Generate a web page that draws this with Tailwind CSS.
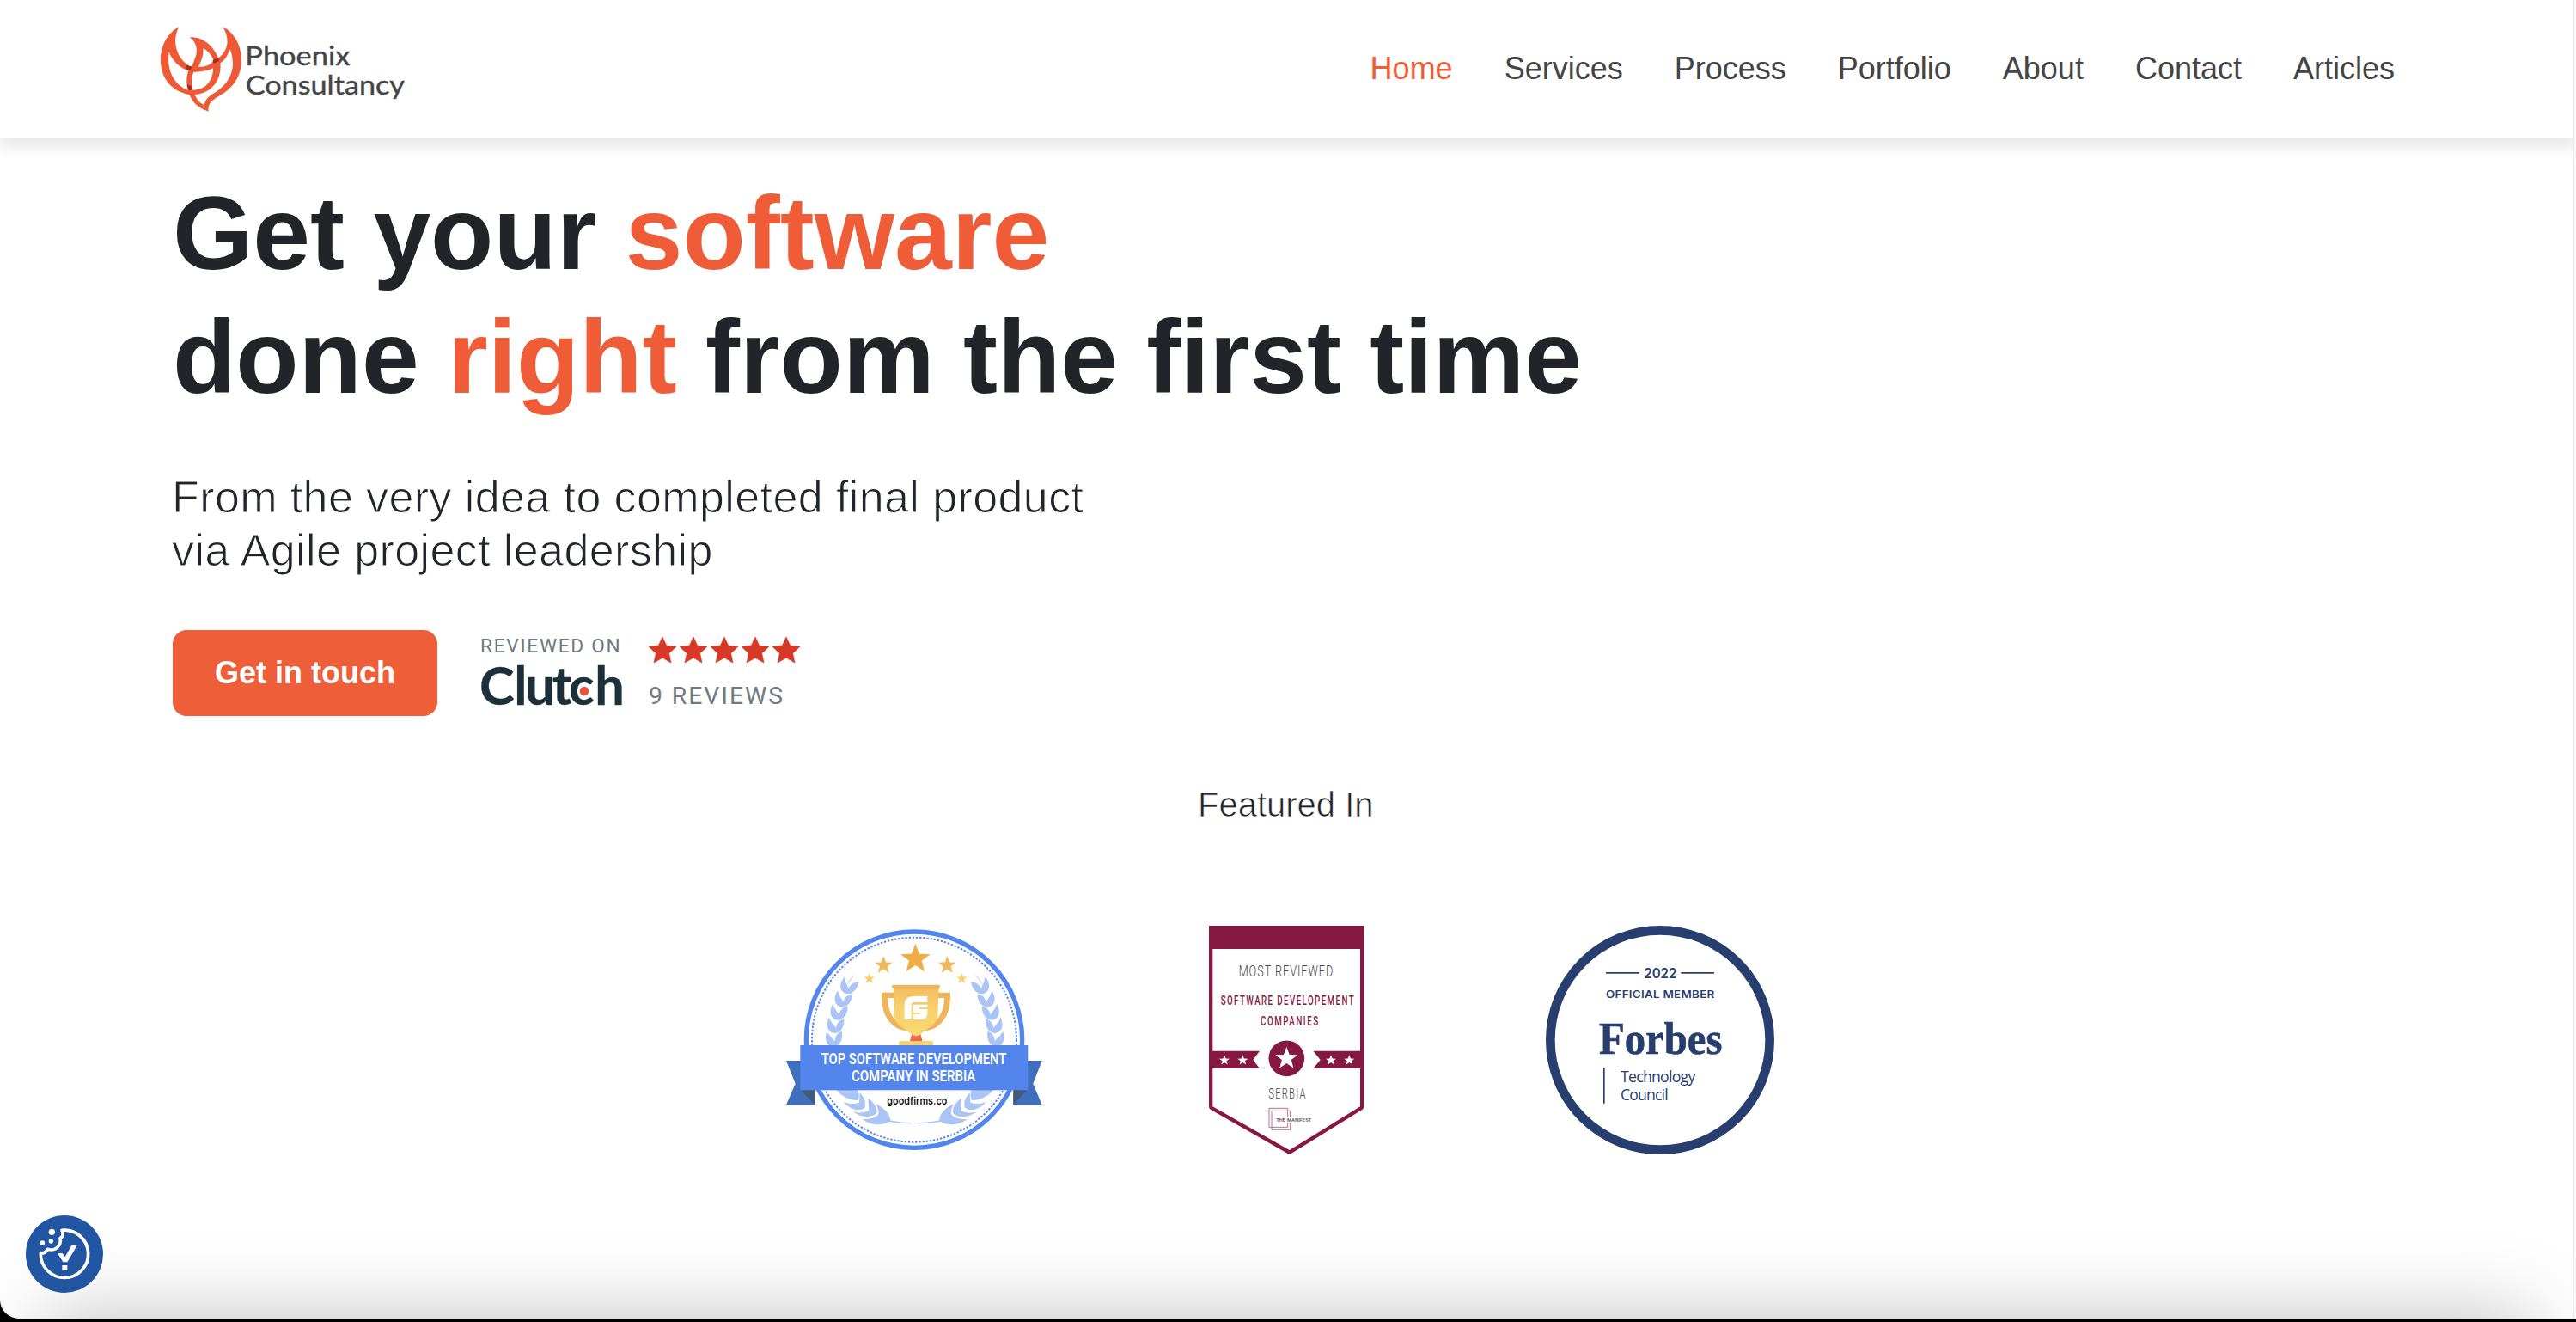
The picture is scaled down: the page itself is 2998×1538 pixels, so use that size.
<!DOCTYPE html>
<html lang="en">
<head>
<meta charset="utf-8">
<title>Phoenix Consultancy</title>
<script src="https://cdn.jsdelivr.net/npm/@tailwindcss/browser@4"></script>
</head>
<body class="bg-black font-['Liberation_Sans',sans-serif] text-[#212529]">
<div class="relative h-[1534px] w-[2998px] overflow-hidden rounded-bl-[22px] bg-white">
  <header class="flex h-[160px] items-start justify-between bg-white pr-[211px] pl-[186px] shadow-[0_12px_16px_rgba(0,0,0,0.095)]">
    <!-- logo -->
    <svg class="mt-[30px] h-[100px] w-[288px] overflow-visible" viewBox="48 60 864 300">
      <path fill="#ee5a36" fill-rule="evenodd" d="M115 63C50 100 40 180 60 230C78 275 120 295 152 300C160 330 190 350 218 359C215 335 225 322 255 305C300 280 333 240 333 180C333 130 310 85 268 63C290 100 292 142 252 173C235 130 200 98 152 100C180 120 180 150 172 170L160 203C120 190 82 125 115 63Z
      M80 150C90 185 125 210 148 217C140 240 140 262 147 285C105 270 70 225 80 150Z
      M199 138C220 150 230 165 236 182C222 198 205 204 182 203C195 180 202 160 199 138Z
      M166 221C190 222 215 218 234 208C234 250 210 285 163 284C158 260 158 240 166 221Z
      M292 142C285 165 275 180 259 190C265 240 235 295 170 300C178 320 190 332 203 335C208 316 220 303 245 290C285 265 308 220 302 180C301 165 297 150 292 142Z"/>
      <path fill="#a52c20" d="M142 198L160 203L154 218L138 211ZM232 180L252 172L256 182L236 192ZM143 264L158 270L160 284L147 284Z"/>
      <g fill="#454545" stroke="#454545" stroke-width="1.2" font-family="Lato, sans-serif" font-size="95">
        <text x="346" y="197" textLength="366" lengthAdjust="spacingAndGlyphs">Phoenix</text>
        <text x="347" y="299" textLength="556" lengthAdjust="spacingAndGlyphs">Consultancy</text>
      </g>
    </svg>
    <nav class="flex h-full items-center gap-[60px] text-[36px] text-[#454545]">
      <a class="text-[#ee5d38]">Home</a><a>Services</a><a>Process</a><a>Portfolio</a><a>About</a><a>Contact</a><a>Articles</a>
    </nav>
  </header>

  <main class="pt-[39px]">
    <h1 class="pl-[201px] text-[120px] leading-[144px] font-bold">Get your <span class="text-[#ee5d38]">software</span><br>done <span class="text-[#ee5d38]">right</span> from the first time</h1>
    <p class="mt-[60px] pl-[200px] text-[52px] leading-[62px] tracking-[0.4px] [-webkit-text-stroke:1px_white]">From the very idea to completed final product<br>via Agile project leadership</p>
    <div class="mt-[62px] flex h-[100px] items-start gap-[51px] pl-[201px]">
      <button class="h-[100px] w-[308px] rounded-[16px] bg-[#ed5e39] text-[36px] font-bold text-white">Get in touch</button>
      <svg class="mt-[7px] h-[84px] w-[376px] overflow-visible" viewBox="60 60 1128 252">
        <defs><path id="star" d="M0-48L14-18L48-14L23 9L30 42L0 25L-30 42L-23 9L-48-14L-14-18Z"/></defs>
        <g font-family="Roboto, sans-serif" fill="#6f7b7e">
          <text x="57" y="117" font-size="68" textLength="488">REVIEWED ON</text>
          <text x="645" y="296" font-size="85" textLength="468">9 REVIEWS</text>
        </g>
        <text x="54 175 214 308 366 457" y="299" font-family="Lato, sans-serif" font-weight="700" font-size="184" fill="#1d303a" stroke="#1d303a" stroke-width="1">Clutch</text>
        <circle cx="420" cy="252" r="16" fill="#f04f3c"/>
        <g fill="#d63a26" stroke="#d63a26" stroke-width="2"><use href="#star" x="693" y="111"/><use href="#star" x="801" y="111"/><use href="#star" x="909" y="111"/><use href="#star" x="1017" y="111"/><use href="#star" x="1125" y="111"/></g>
      </svg>
    </div>

    <h2 class="mt-[79px] pl-[1394px] text-[40px] leading-[48px] [-webkit-text-stroke:0.7px_white]">Featured In</h2>
    <div class="mt-[117px] flex pl-[915px]">
      <!-- GoodFirms badge -->
      <svg class="h-[266px] w-[298px]" viewBox="45 51 894 798">
        <defs>
          <linearGradient id="cup" x1="0" y1="0" x2="0" y2="1"><stop offset="0" stop-color="#f1bd62"/><stop offset=".45" stop-color="#f8d26c"/><stop offset="1" stop-color="#fbd870"/></linearGradient>
          <path id="s5" d="M0-50L13-15L50-14L21 8L31 44L0 23L-31 44L-21 8L-50-14L-13-15Z"/>
          <path id="leaf" d="M-17-34C-34-8-29 20-4 24C18 24 34 4 34-22C20-21 8-12 2 6C-4-8-14-16-17-34Z"/>
          <g id="laurel" fill="#aac4f6">
            <path d="M284 225C272 235 262 248 256 262C260 246 270 232 284 225Z"/>
            <use href="#leaf" transform="translate(261 265) rotate(8)"/>
            <use href="#leaf" transform="translate(242 311)"/>
            <use href="#leaf" transform="translate(227 356) rotate(-4)"/>
            <use href="#leaf" transform="translate(216 402) rotate(-8)"/>
            <use href="#leaf" transform="translate(211 448) rotate(-13)"/>
            <path d="M219 622H296C300 640 300 650 295 660C268 662 237 646 219 622Z"/>
            <path d="M302 634C316 648 324 664 320 686C294 704 260 686 246 666C266 674 284 674 300 668Z"/>
            <path d="M331 652C350 668 364 684 361 704C340 726 300 718 278 700C300 706 320 704 334 696Z"/>
            <path d="M358 672C392 690 410 710 408 732C380 752 340 748 310 726C335 728 354 722 366 710C370 700 366 688 358 672Z"/>
            <path d="M405 729Q440 738 485 738V742Q440 743 404 735Z"/>
          </g>
        </defs>
        <circle cx="492" cy="449" r="377" fill="#fff" stroke="#5386ed" stroke-width="16"/>
        <circle cx="492" cy="449" r="357" fill="none" stroke="#5386ed" stroke-width="6" stroke-dasharray="7 5.5"/>
        <use href="#laurel"/><use href="#laurel" transform="translate(988 0) scale(-1 1)"/>
        <use href="#s5" transform="translate(496 165) scale(1.04)" fill="#f1ac45"/>
        <g fill="#f0b75c"><use href="#s5" transform="translate(385 188) scale(.62)"/><use href="#s5" transform="translate(607 188) scale(.62)"/></g>
        <g fill="#f8d16c"><use href="#s5" transform="translate(335 235) scale(.38)"/><use href="#s5" transform="translate(658 235) scale(.38)"/></g>
        <path fill="#f0b45a" fill-rule="evenodd" d="M378 284H618V300C618 370 580 412 535 417H461C416 412 378 370 378 300ZM399 303C400 345 416 374 436 389L424 303ZM597 303H572L560 389C580 374 596 345 597 303Z"/>
        <path fill="url(#cup)" d="M419 266H578L574 370C570 395 530 415 512 432Q498 438 484 432C466 415 426 395 422 370Z"/>
        <rect x="414" y="257" width="168" height="12" rx="5" fill="#f0b45a"/>
        <path fill="#ed654f" d="M483 430Q498 442 514 430L521 454H477Z"/>
        <rect x="438" y="453" width="120" height="18" rx="6" fill="#f8d26c"/>
        <path fill="#fff" d="M538 297V318H490Q482 318 482 326V378H458V327Q458 297 488 297ZM488 326H538V336H510V342H538V356Q538 378 516 378H488V360H508Q514 360 514 354H488Z"/>
        <path fill="#4070bd" d="M45 522H145V676H45L77 602ZM938 522H838V676H938L907 602Z"/>
        <path fill="#455a7b" d="M94 622H145V676ZM889 622H838V676Z"/>
        <rect x="94" y="468" width="795" height="157" fill="#5385ec"/>
        <g font-family="Roboto, sans-serif" font-weight="600" fill="#fff" font-size="54">
          <text x="167" y="533" textLength="647" lengthAdjust="spacingAndGlyphs">TOP SOFTWARE DEVELOPMENT</text>
          <text x="273" y="595" textLength="433" lengthAdjust="spacingAndGlyphs">COMPANY IN SERBIA</text>
        </g>
        <text x="397" y="675" font-family="Inter, sans-serif" font-weight="600" font-size="35" fill="#111" textLength="210" lengthAdjust="spacingAndGlyphs">goodfirms.co</text>
      </svg>
      <!-- The Manifest badge -->
      <svg class="ml-[194px] h-[266px] w-[181px]" viewBox="80 51 543 798">
        <path fill="#861942" fill-rule="evenodd" d="M80 51H621V684Q621 688 616 692L366 847Q361 850 356 847L85 692Q80 688 80 684ZM93 132V682L361 834L608 682V132Z"/>
        <g font-family="Roboto, sans-serif">
          <text transform="translate(184 228) scale(.72 1)" font-size="53" font-weight="300" fill="#444" textLength="457">MOST REVIEWED</text>
          <g fill="#861942" font-weight="500" font-size="45">
            <text transform="translate(121 327) scale(.65 1)" textLength="715">SOFTWARE DEVELOPEMENT</text>
            <text transform="translate(260 399) scale(.65 1)" textLength="310">COMPANIES</text>
          </g>
          <text transform="translate(288 654) scale(.72 1)" font-size="47" font-weight="300" fill="#444" textLength="180">SERBIA</text>
        </g>
        <path fill="#861942" d="M90 488H257L234 519L257 549H90ZM612 488H444L469 519L444 549H612Z"/>
        <circle cx="351" cy="514" r="62.500" fill="#861942"/>
        <g fill="#fff"><use href="#s5" transform="translate(351 513) scale(.78)"/><use href="#s5" transform="translate(134 520) scale(.36)"/><use href="#s5" transform="translate(198 520) scale(.36)"/><use href="#s5" transform="translate(506 520) scale(.36)"/><use href="#s5" transform="translate(570 520) scale(.36)"/></g>
        <path fill="none" stroke="#a85578" stroke-width="2.500" d="M355 720V688H290V754H298M364 720V697H299V763H364V738M355 738V754H299"/>
        <text x="315" y="735" font-family="Inter, sans-serif" font-size="16" font-weight="600" fill="#861942" textLength="32" lengthAdjust="spacingAndGlyphs">THE</text>
        <text x="353" y="735" font-family="Inter, sans-serif" font-size="16" font-weight="600" fill="#555" textLength="85" lengthAdjust="spacingAndGlyphs">MANIFEST</text>
      </svg>
      <!-- Forbes badge -->
      <svg class="ml-[211px] h-[266px] w-[266px]" viewBox="57 51 798 798">
        <circle cx="456" cy="450" r="383" fill="#fff" stroke="#283e6f" stroke-width="32"/>
        <g fill="#283e6f">
          <path d="M267 213H383V218H267ZM529 213H645V218H529ZM258 546H263V671H258Z"/>
          <g font-family="Inter, sans-serif">
            <text x="400" y="233" font-size="46" font-weight="600" textLength="114" lengthAdjust="spacingAndGlyphs">2022</text>
            <text transform="translate(267 302) scale(1.18 1)" font-size="34" font-weight="600" textLength="321">OFFICIAL MEMBER</text>
          </g>
          <text x="243" y="499" font-family="'Liberation Serif', serif" font-weight="700" font-size="158" stroke="#283e6f" stroke-width="2" textLength="430" lengthAdjust="spacingAndGlyphs">Forbes</text>
          <g font-family="'Open Sans', sans-serif" font-size="53">
            <text x="318" y="596" textLength="262">Technology</text>
            <text x="318" y="659" textLength="167">Council</text>
          </g>
        </g>
      </svg>
    </div>
  </main>

  <!-- soft shade along the bottom edge -->
  <div class="pointer-events-none absolute top-[1534px] right-[50px] left-[50px] h-[300px] shadow-[0_0_90px_rgba(0,0,0,0.26)]"></div>
  <!-- scrollbar track -->
  <div class="absolute top-0 right-0 h-full w-[4px] border-l-2 border-[#e8e8e8] bg-[#fafafa]"></div>

  <!-- cookie settings -->
  <button class="absolute top-[1414px] left-[30px] size-[90px]">
    <svg class="size-full" viewBox="90 72 270 270">
      <circle cx="225" cy="207" r="135" fill="#2356a2"/>
      <path fill="none" stroke="#fff" stroke-width="11" stroke-linejoin="round" d="M216 124A83 83 0 1 1 142 203Q158 206 166 190Q186 196 200 184Q214 172 210 152Q226 142 216 124Z"/>
      <g fill="#fff"><circle cx="181" cy="130" r="11"/><circle cx="148" cy="168" r="8.500"/><circle cx="178" cy="162" r="8"/>
      <path d="M201 204H218L227 217L250 177H269L235 235H220ZM217 246H235V264H217Z"/></g>
    </svg>
  </button>
</div>
</body>
</html>
